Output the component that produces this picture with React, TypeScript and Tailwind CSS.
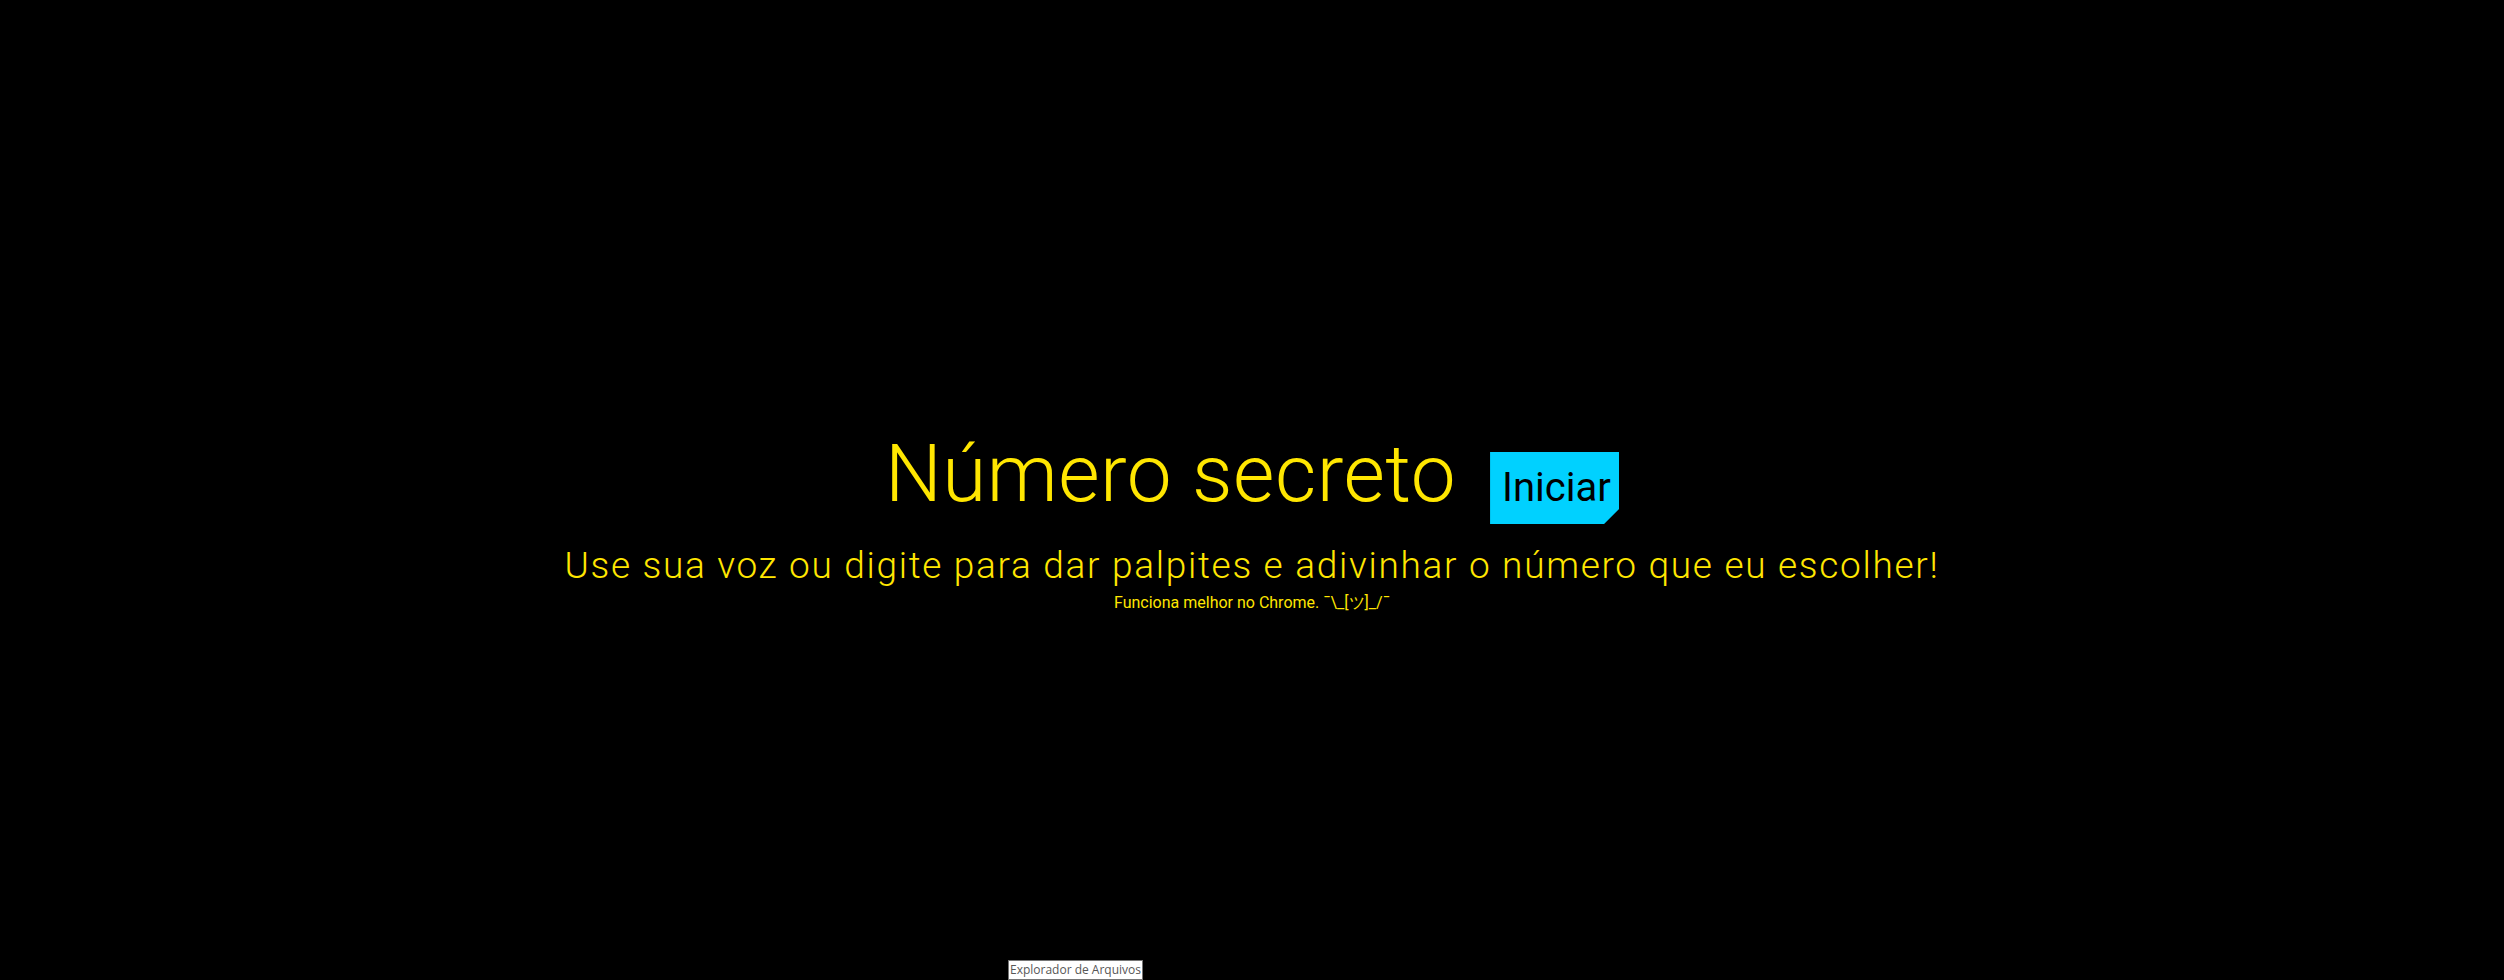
export default function App() {
  return (
    <div className="relative h-[980px] w-full bg-black flex flex-col items-center pt-[434px] font-['Roboto',sans-serif] overflow-hidden">
      <div className="flex items-baseline">
        <h1 className="text-[80px] leading-none text-[#FFE600] font-light tracking-[0.5px]">Número secreto</h1>
        <button className="ml-[34px] h-[72px] w-[129px] pl-[12px] flex items-center bg-[#00D1FF] text-black text-[40px] leading-none font-normal [clip-path:polygon(0_0,100%_0,100%_calc(100%-15px),calc(100%-15px)_100%,0_100%)]">
          Iniciar
        </button>
      </div>
      <p className="mt-[23px] text-[37px] leading-none text-[#FFE600] font-light tracking-[1.7px]">
        Use sua voz ou digite para dar palpites e adivinhar o número que eu escolher!
      </p>
      <p className="mt-[11px] text-[16px] leading-none text-[#FFE600]">
        Funciona melhor no Chrome. ¯\_[ツ]_/¯
      </p>
      <div className="absolute left-[1008px] top-[960px] h-[20px] w-[135px] bg-white border border-[#767676] flex items-center justify-center text-[12px] text-[#575757] font-['Open_Sans',sans-serif]">
        Explorador de Arquivos
      </div>
    </div>
  );
}
